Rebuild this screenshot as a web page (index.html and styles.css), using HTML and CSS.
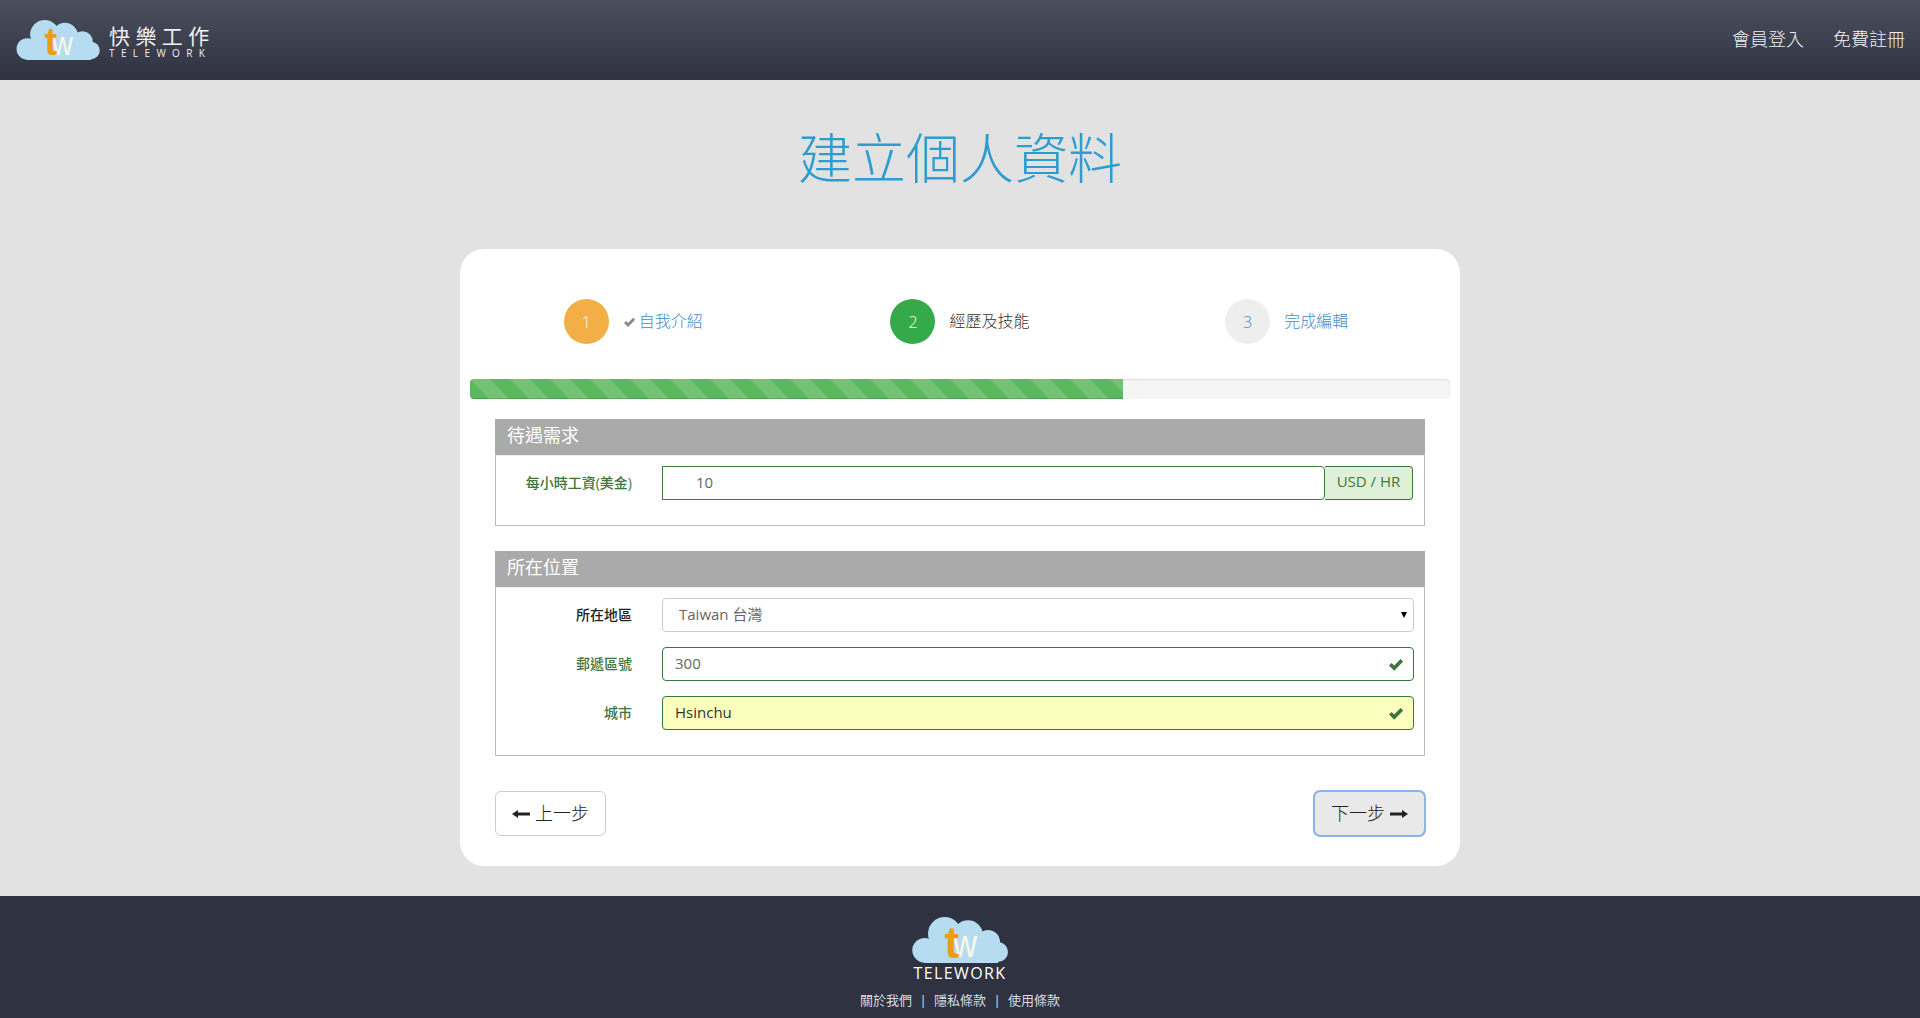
FILE: index.html
```html
<!DOCTYPE html>
<html lang="zh-Hant">
<head>
  <meta charset="UTF-8">
  <meta name="viewport" content="width=device-width, initial-scale=1.0">
  <title>建立個人資料</title>
  <link rel="stylesheet" href="styles.css">
</head>
<body>
  <svg class="defs" width="0" height="0">
    <symbol id="cloud" viewBox="0 0 96 46">
      <g fill="#b5dcf1">
        <circle cx="12.7" cy="33.3" r="12.4"/>
        <circle cx="32.7" cy="16.7" r="16.7"/>
        <circle cx="56" cy="18.3" r="15"/>
        <circle cx="76" cy="25" r="12"/>
        <circle cx="86" cy="35" r="10"/>
        <rect x="12" y="26" width="74" height="20"/>
      </g>
      <text class="logo-w" x="41" y="40" textLength="24" lengthAdjust="spacingAndGlyphs">w</text>
      <text class="logo-t" x="32.5" y="40.5">t</text>
    </symbol>
    <symbol id="check" viewBox="0 0 16 14">
      <path d="M1 7.5 L3.6 5 L6.2 7.6 L12.6 1 L15.2 3.6 L6.2 12.8 Z"/>
    </symbol>
  </svg>

  <header class="topbar">
    <a class="brand" href="#">
      <svg class="brand-cloud"><use href="#cloud"/></svg>
      <span class="brand-text">
        <span class="brand-zh">快樂工作</span>
        <span class="brand-en">TELEWORK</span>
      </span>
    </a>
    <nav class="topnav">
      <a href="#">會員登入</a>
      <a href="#">免費註冊</a>
    </nav>
  </header>

  <main class="page">
    <h1 class="page-title">建立個人資料</h1>

    <div class="card">
      <div class="steps">
        <div class="step">
          <span class="step-num step-done">1</span>
          <svg class="step-check"><use href="#check"/></svg>
          <a class="step-label" href="#">自我介紹</a>
        </div>
        <div class="step step-gap">
          <span class="step-num step-active">2</span>
          <span class="step-label step-current">經歷及技能</span>
        </div>
        <div class="step step-gap">
          <span class="step-num">3</span>
          <a class="step-label" href="#">完成編輯</a>
        </div>
      </div>

      <div class="progress">
        <div class="progress-bar" style="width: 66.67%"></div>
      </div>

      <section class="box">
        <h2 class="box-title">待遇需求</h2>
        <div class="box-body">
          <div class="field">
            <label class="field-label ok">每小時工資(美金)</label>
            <div class="field-group">
              <input class="input input-money" type="text" value="10">
              <span class="addon">USD / HR</span>
            </div>
          </div>
        </div>
      </section>

      <section class="box">
        <h2 class="box-title">所在位置</h2>
        <div class="box-body">
          <div class="field">
            <label class="field-label plain">所在地區</label>
            <div class="select-wrap">
              <select class="input select">
                <option>Taiwan 台灣</option>
              </select>
            </div>
          </div>
          <div class="field">
            <label class="field-label ok">郵遞區號</label>
            <div class="input-wrap">
              <input class="input input-ok" type="text" value="300">
              <svg class="input-check"><use href="#check"/></svg>
            </div>
          </div>
          <div class="field">
            <label class="field-label ok">城市</label>
            <div class="input-wrap">
              <input class="input input-ok input-filled" type="text" value="Hsinchu">
              <svg class="input-check"><use href="#check"/></svg>
            </div>
          </div>
        </div>
      </section>

      <div class="actions">
        <button class="btn" type="button">
          <svg class="arrow" viewBox="0 0 18 10"><path d="M0 5 L6 1 V3.6 H18 V6.4 H6 V9 Z"/></svg>
          上一步
        </button>
        <button class="btn btn-focus" type="button">
          下一步
          <svg class="arrow" viewBox="0 0 18 10"><path d="M18 5 L12 1 V3.6 H0 V6.4 H12 V9 Z"/></svg>
        </button>
      </div>
    </div>
  </main>

  <footer class="footer">
    <svg class="footer-cloud"><use href="#cloud"/></svg>
    <div class="footer-name">TELEWORK</div>
    <div class="footer-links">
      <a href="#">關於我們</a>
      <span class="sep">|</span>
      <a href="#">隱私條款</a>
      <span class="sep">|</span>
      <a href="#">使用條款</a>
    </div>
  </footer>
</body>
</html>
```

FILE: styles.css
```css
* {
  box-sizing: border-box;
}

body {
  margin: 0;
  font-family: "Open Sans", "Noto Sans CJK TC", sans-serif;
  font-size: 14px;
  color: #555;
  background: #e2e2e2;
}

a {
  text-decoration: none;
}

.defs {
  position: absolute;
}

/* header */
.topbar {
  height: 80px;
  display: flex;
  justify-content: space-between;
  align-items: center;
  padding: 0 15px 0 16px;
  background: linear-gradient(to bottom, #4b4f5d, #2f3140);
}

.brand {
  display: flex;
  align-items: center;
  gap: 9px;
}

.brand-cloud {
  width: 84px;
  height: 40px;
}

.logo-t {
  font-family: "Liberation Sans", sans-serif;
  font-size: 44px;
  font-weight: 700;
  fill: #ee9c10;
}

.logo-w {
  font-family: "Liberation Sans", sans-serif;
  font-size: 38px;
  fill: #f8f8e6;
}

.brand-text {
  display: flex;
  flex-direction: column;
  margin-top: 2px;
  color: #f1f1f1;
}

.brand-zh {
  font-size: 21px;
  line-height: 24px;
  letter-spacing: 5.4px;
}

.brand-en {
  font-size: 10px;
  line-height: 11px;
  letter-spacing: 6.4px;
}

.topnav {
  display: flex;
  gap: 29px;
  margin-bottom: 4px;
}

.topnav a {
  font-size: 18px;
  font-weight: 300;
  color: #f0f3f6;
}

/* main */
.page {
  height: 816px;
  padding-top: 48px;
}

.page-title {
  margin: 0 0 61px;
  font-size: 54px;
  line-height: 60px;
  font-weight: 300;
  text-align: center;
  color: #2c9dd1;
}

.card {
  width: 1000px;
  height: 617px;
  margin: 0 auto;
  padding: 50px 10px 0;
  background: #fff;
  border-radius: 24px;
}

/* steps */
.steps {
  display: grid;
  grid-template-columns: repeat(3, 1fr);
}

.step {
  display: flex;
  align-items: center;
  justify-content: center;
}

.step-num {
  width: 45px;
  height: 45px;
  border-radius: 50%;
  display: flex;
  align-items: center;
  justify-content: center;
  font-size: 16px;
  font-weight: 300;
  color: #428bca;
  background: #eee;
}

.step-done {
  color: #fff;
  background: #f3ae45;
}

.step-active {
  color: #fff;
  background: #35aa4b;
}

.step-gap .step-num {
  margin-right: 14px;
}

.step-check {
  width: 13px;
  height: 11px;
  margin: 2px 3px 0 14px;
  fill: #8a8a8a;
}

.step-label {
  margin-bottom: 3px;
  font-size: 16px;
  font-weight: 300;
  color: #428bca;
}

.step-current {
  color: #333;
}

/* progress */
.progress {
  height: 20px;
  margin: 35px 0 20px;
  border-radius: 4px;
  background: #f5f5f5;
  box-shadow: inset 0 1px 2px rgba(0, 0, 0, 0.1);
  overflow: hidden;
}

.progress-bar {
  height: 100%;
  background-color: #5cb85c;
  background-image: linear-gradient(45deg,
    rgba(255, 255, 255, 0.15) 25%, transparent 25%,
    transparent 50%, rgba(255, 255, 255, 0.15) 50%,
    rgba(255, 255, 255, 0.15) 75%, transparent 75%, transparent);
  background-size: 40px 40px;
  box-shadow: inset 0 -1px 0 rgba(0, 0, 0, 0.15);
}

/* form boxes */
.box {
  margin: 0 25px 25px;
}

.box-title {
  margin: 0;
  height: 36px;
  padding: 0 12px;
  font-size: 18px;
  font-weight: 400;
  line-height: 33px;
  color: #fff;
  background: #aaa;
}

.box-body {
  display: flex;
  flex-direction: column;
  gap: 15px;
  padding: 10px 10px 25px 0;
  border: 1px solid #bbb;
  border-top-color: #eee;
}

.field {
  display: flex;
  align-items: center;
  gap: 30px;
}

.field-label {
  width: 136px;
  flex: none;
  margin-bottom: 2px;
  font-size: 14px;
  font-weight: 500;
  text-align: right;
}

.field-label.ok {
  color: #3c763d;
}

.field-label.plain {
  color: #222;
}

.field-group,
.input-wrap,
.select-wrap {
  flex: 1;
  display: flex;
  position: relative;
}

.field-group {
  margin-right: 1px;
}

.input {
  width: 100%;
  height: 34px;
  padding: 0 12px 2px;
  font-family: inherit;
  font-size: 15px;
  color: #666;
  background: #fff;
  border: 1px solid #ccc;
  border-radius: 4px;
  outline: none;
}

.input-ok {
  border-color: #3c763d;
}

.input-filled {
  color: #333;
  background: #faffbd;
}

.input-money {
  flex: 1;
  width: auto;
  padding-left: 33px;
  border-color: #3c763d;
  border-radius: 0 4px 4px 0;
}

.addon {
  width: 88px;
  height: 34px;
  font-size: 15px;
  line-height: 29px;
  text-align: center;
  color: #3c763d;
  background: #dff0d8;
  border: 1px solid #3c763d;
  border-left: 0;
  border-radius: 0 4px 4px 0;
}

.select {
  appearance: none;
  padding-left: 16px;
}

/* the little black triangle of the select */
.select-wrap::after {
  content: "";
  position: absolute;
  right: 7px;
  top: 14px;
  border-style: solid;
  border-width: 6px 3px 0;
  border-color: #000 transparent transparent;
}

.input-check {
  position: absolute;
  right: 10px;
  top: 11px;
  width: 16px;
  height: 14px;
  fill: #3c763d;
}

/* buttons */
.actions {
  display: flex;
  justify-content: space-between;
  margin: 35px 25px 0;
}

.btn {
  width: 111px;
  height: 45px;
  display: flex;
  align-items: center;
  justify-content: center;
  gap: 5px;
  padding: 0 0 3px;
  font-family: inherit;
  font-size: 18px;
  font-weight: 300;
  color: #222;
  background: #fff;
  border: 1px solid #ccc;
  border-radius: 6px;
}

.btn-focus {
  background: #e9e9e9;
  border-color: #adadad;
  outline: 2px solid #8ab4f0;
  outline-offset: -1px;
}

.arrow {
  width: 18px;
  height: 10px;
  margin-top: 3px;
  fill: #222;
}

/* footer */
.footer {
  height: 122px;
  padding-top: 21px;
  text-align: center;
  background: #2f3240;
}

.footer-cloud {
  display: block;
  width: 96px;
  height: 46px;
  margin: 0 auto;
}

.footer-name {
  margin-top: 1px;
  font-size: 16px;
  line-height: 18px;
  letter-spacing: 1.4px;
  color: #fff;
}

.footer-links {
  margin-top: 9px;
  font-size: 13px;
  line-height: 18px;
}

.footer-links a {
  color: #d8dce2;
}

.sep {
  margin: 0 4px;
  color: #f0dfe0;
}
```
